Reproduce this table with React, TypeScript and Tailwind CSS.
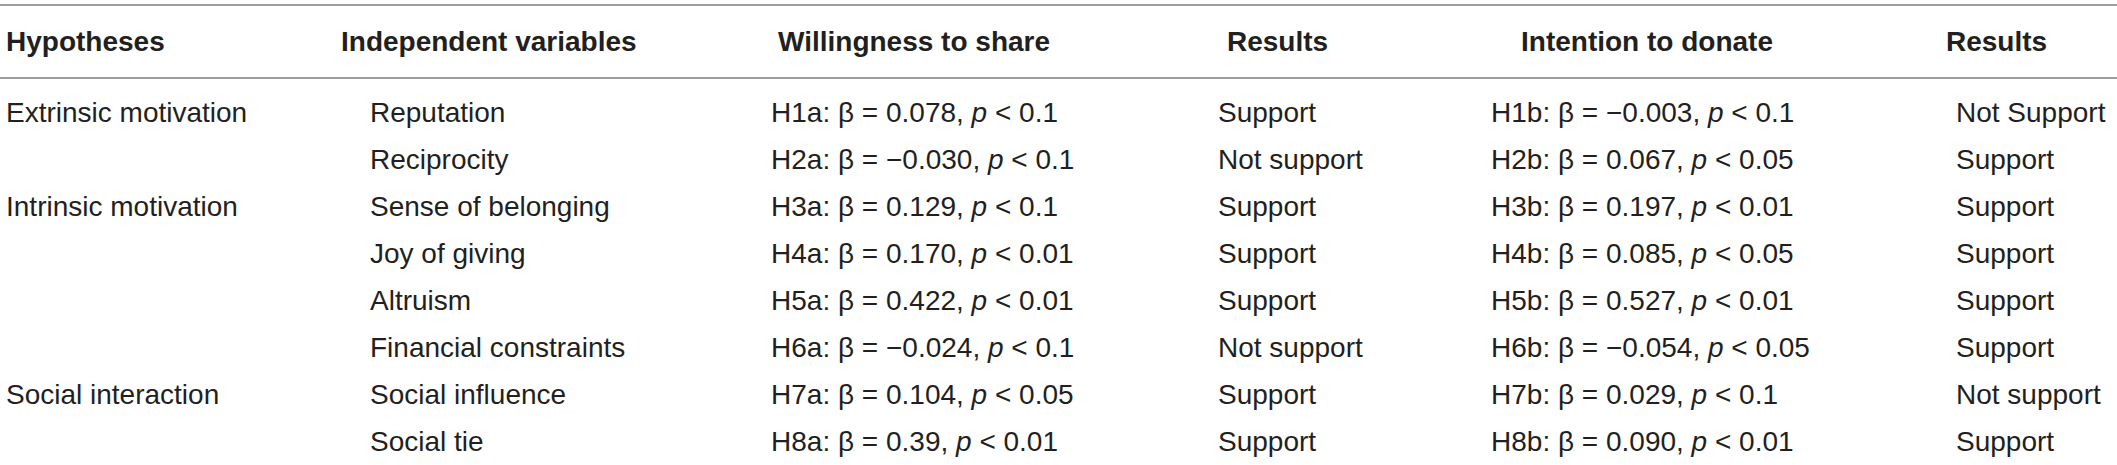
import React from 'react'

type Row = {
  group: string
  variable: string
  share: [string, string, string]
  shareResult: string
  donate: [string, string, string]
  donateResult: string
}

const rows: Row[] = [
  { group: 'Extrinsic motivation', variable: 'Reputation', share: ['H1a', '0.078', '0.1'], shareResult: 'Support', donate: ['H1b', '\u22120.003', '0.1'], donateResult: 'Not Support' },
  { group: '', variable: 'Reciprocity', share: ['H2a', '\u22120.030', '0.1'], shareResult: 'Not support', donate: ['H2b', '0.067', '0.05'], donateResult: 'Support' },
  { group: 'Intrinsic motivation', variable: 'Sense of belonging', share: ['H3a', '0.129', '0.1'], shareResult: 'Support', donate: ['H3b', '0.197', '0.01'], donateResult: 'Support' },
  { group: '', variable: 'Joy of giving', share: ['H4a', '0.170', '0.01'], shareResult: 'Support', donate: ['H4b', '0.085', '0.05'], donateResult: 'Support' },
  { group: '', variable: 'Altruism', share: ['H5a', '0.422', '0.01'], shareResult: 'Support', donate: ['H5b', '0.527', '0.01'], donateResult: 'Support' },
  { group: '', variable: 'Financial constraints', share: ['H6a', '\u22120.024', '0.1'], shareResult: 'Not support', donate: ['H6b', '\u22120.054', '0.05'], donateResult: 'Support' },
  { group: 'Social interaction', variable: 'Social influence', share: ['H7a', '0.104', '0.05'], shareResult: 'Support', donate: ['H7b', '0.029', '0.1'], donateResult: 'Not support' },
  { group: '', variable: 'Social tie', share: ['H8a', '0.39', '0.01'], shareResult: 'Support', donate: ['H8b', '0.090', '0.01'], donateResult: 'Support' },
]

// fixed column template shared by header and body
const cols = 'grid grid-cols-[335px_430px_445px_275px_455px_1fr]'

function Stat({ v }: { v: [string, string, string] }) {
  return (
    <span>
      {v[0]}: β = {v[1]}, <i>p</i> {'<'} {v[2]}
    </span>
  )
}

export default function App() {
  return (
    <div
      className="w-[2117px] h-[465px] bg-white text-[#231f20] text-[28px] overflow-hidden"
      style={{ fontFamily: '"Liberation Sans", Arial, sans-serif' }}
    >
      <div className={`${cols} mt-[4px] h-[75px] items-center border-y-2 border-[#9d9d9d] font-bold`}>
        <div className="pl-[6px]">Hypotheses</div>
        <div className="pl-[6px]">Independent variables</div>
        <div className="pl-[13px]">Willingness to share</div>
        <div className="pl-[17px]">Results</div>
        <div className="pl-[36px]">Intention to donate</div>
        <div className="pl-[6px]">Results</div>
      </div>

      <div className="pt-[10px]">
        {rows.map((r, i) => (
          <div key={i} className={`${cols} h-[47px] items-center whitespace-nowrap`}>
            <div className="pl-[6px]">{r.group}</div>
            <div className="pl-[35px]">{r.variable}</div>
            <div className="pl-[6px]"><Stat v={r.share} /></div>
            <div className="pl-[8px]">{r.shareResult}</div>
            <div className="pl-[6px]"><Stat v={r.donate} /></div>
            <div className="pl-[16px]">{r.donateResult}</div>
          </div>
        ))}
      </div>
    </div>
  )
}
